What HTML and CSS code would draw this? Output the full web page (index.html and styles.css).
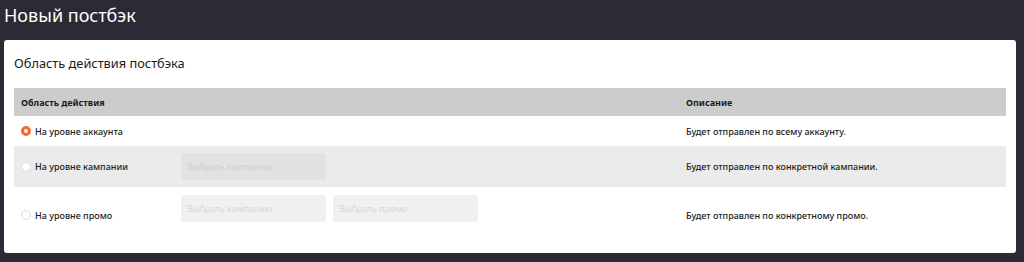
FILE: index.html
```html
<!DOCTYPE html>
<html>
<head>
    <meta charset="utf-8">
    <link rel="stylesheet" href="styles.css">
</head>

<body>

    <h1 class="page-title">Новый постбэк</h1>

    <div class="card">
        <h2 class="card-title">Область действия постбэка</h2>

        <div class="scope-table">
            <div class="scope-row head">
                <div class="cell-scope">Область действия</div>
                <div class="cell-desc">Описание</div>
            </div>

            <div class="scope-row">
                <div class="cell-scope">
                    <label class="radio checked"><span class="dot"></span>На уровне аккаунта</label>
                </div>
                <div class="cell-desc">Будет отправлен по всему аккаунту.</div>
            </div>

            <div class="scope-row shaded">
                <div class="cell-scope">
                    <label class="radio"><span class="dot"></span>На уровне кампании</label>
                    <div class="selects">
                        <div class="select">Выбрать кампанию</div>
                    </div>
                </div>
                <div class="cell-desc">Будет отправлен по конкретной кампании.</div>
            </div>

            <div class="scope-row tall">
                <div class="cell-scope">
                    <label class="radio"><span class="dot"></span>На уровне промо</label>
                    <div class="selects">
                        <div class="select">Выбрать кампанию</div>
                        <div class="select">Выбрать промо</div>
                    </div>
                </div>
                <div class="cell-desc">Будет отправлен по конкретному промо.</div>
            </div>
        </div>
    </div>

</body>

</html>
```

FILE: styles.css
```css
body {
    margin: 0;
    background-color: #2c2a34;
    font-family: "Noto Sans", "Open Sans", sans-serif;
    color: #1c1c1c;
}

.page-title {
    margin: 0;
    padding: 2px 4px 0;
    height: 38px;
    color: #ffffff;
    font-size: 18px;
    font-weight: 400;
    line-height: 26px;
}

.card {
    margin: 0 8px 0 4px;
    padding: 12px 10px 10px 10px;
    background-color: #ffffff;
    border-radius: 3px;
}

.card-title {
    margin: 0 0 14px 0;
    padding-left: 0;
    font-size: 12.8px;
    font-weight: 400;
    line-height: 22px;
}

.scope-table {
    font-size: 9px;
    font-weight: 500;
}

.scope-row {
    display: flex;
    align-items: center;
    min-height: 30px;
}

.scope-row.head {
    height: 28px;
    min-height: 28px;
    background-color: #cccccc;
    font-weight: 700;
}

.scope-row.shaded {
    height: 41px;
    background-color: #ebebeb;
}

.scope-row.tall {
    height: 56px;
}

.cell-scope {
    display: flex;
    align-items: center;
    width: 665px;
    padding-left: 7px;
    box-sizing: border-box;
}

.cell-desc {
    padding-left: 7px;
}

.radio {
    display: flex;
    align-items: center;
    width: 160px;
}

.dot {
    width: 10px;
    height: 10px;
    margin-right: 4px;
    border-radius: 50%;
    box-sizing: border-box;
    border: 1px solid #dcdcdc;
    background-color: #ffffff;
}

.radio.checked .dot {
    border: 3px solid #f4692a;
}

.selects {
    display: flex;
    gap: 7px;
}

.select {
    width: 145px;
    height: 27px;
    padding-left: 6px;
    box-sizing: border-box;
    border-radius: 3px;
    background-color: #e2e2e2;
    color: #cfcfcf;
    font-weight: 400;
    line-height: 27px;
}

.tall .selects {
    margin-top: -14px;
}

.tall .select {
    background-color: #f0f0f0;
    color: #d6d6d6;
}
```
